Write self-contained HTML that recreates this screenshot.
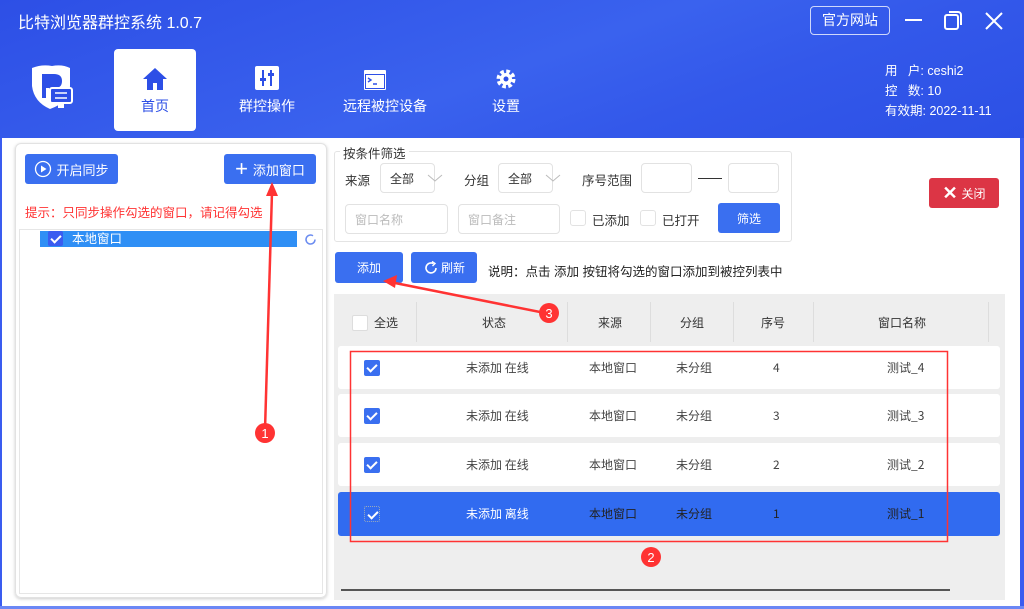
<!DOCTYPE html>
<html><head><meta charset="utf-8"><style>
*{box-sizing:border-box;margin:0;padding:0}
body{width:1024px;height:609px;overflow:hidden;position:relative;background:#fff;font-family:"Liberation Sans","Noto Sans CJK SC",sans-serif;font-size:12px;color:#333}
.a{position:absolute}
.hdr{left:0;top:0;width:1024px;height:138px;background:linear-gradient(160deg,#2d4fe6 0%,#3a62ee 50%,#3358ea 70%,#2c50e5 100%)}
.btn{position:absolute;background:#3a6ff0;color:#fff;border-radius:3px;display:flex;align-items:center;justify-content:center;font-size:12px}
.inp{position:absolute;border:1px solid #e2e2e2;border-radius:4px;background:#fff;color:#bbb;font-size:12px;display:flex;align-items:center;padding-left:9px}
.row{position:absolute;left:338px;width:662px;height:43px;background:#fff;border-radius:3px}
.row span{position:absolute;top:0;line-height:43px;font-size:12px;color:#444;font-family:"Noto Sans CJK SC",sans-serif}
.cb{position:absolute;left:26px;top:14px;width:16px;height:16px;background:#3a6ff0;border-radius:2px}
.cb:after{content:"";position:absolute;left:5px;top:2px;width:4px;height:8px;border:solid #fff;border-width:0 2px 2px 0;transform:rotate(45deg)}
.th{position:absolute;top:314px;font-size:12px;color:#333}
.nav{position:absolute;color:#fff;font-size:14px;text-align:center}
</style></head><body>
<div class="a hdr"></div>
<div class="a" style="left:18px;top:9px;color:#fff;font-size:16px">比特浏览器群控系统 1.0.7</div>
<div class="a" style="left:810px;top:6px;width:80px;height:29px;border:1px solid #cfd8fb;border-radius:4px;color:#fff;font-size:14px;text-align:center;line-height:27px">官方网站</div>
<div class="a" style="left:905px;top:19px;width:17px;height:2px;background:#fff"></div>
<svg class="a" style="left:943px;top:10px" width="22" height="22"><rect x="2" y="5" width="13" height="14" rx="2" fill="none" stroke="#fff" stroke-width="2"/><path d="M6 2h9a3 3 0 0 1 3 3v10" fill="none" stroke="#fff" stroke-width="2"/></svg>
<svg class="a" style="left:984px;top:11px" width="20" height="20"><path d="M2 2L18 18M18 2L2 18" stroke="#fff" stroke-width="2"/></svg>
<div class="a" style="left:885px;top:61px;color:#fff;font-size:12.5px;line-height:20px">用&nbsp;&nbsp;&nbsp;户: ceshi2<br>控&nbsp;&nbsp;&nbsp;数: 10<br>有效期: 2022-11-11</div>
<svg class="a" style="left:28px;top:64px" width="48" height="46"><path d="M4 4 Q14 0 24 2 Q34 0 42 4 V22 Q42 38 22 45 Q6 38 4 22Z" fill="#fff"/><path d="M14 10h12q8 0 8 7t-7 7l6 10h-6l-6-10h-3v10h-4z" fill="#2d4fe6"/><rect x="22" y="24" width="22" height="15" rx="2" fill="#2d4fe6" stroke="#fff" stroke-width="2"/><path d="M27 29h12M27 34h12" stroke="#fff" stroke-width="1.5"/><rect x="30" y="40" width="6" height="4" fill="#fff"/></svg>
<div class="a" style="left:114px;top:49px;width:82px;height:82px;background:#fff;border-radius:4px"></div>
<svg class="a" style="left:142px;top:67px" width="26" height="24"><path d="M13 1L1 12h4v11h6v-7h4v7h6V12h4z" fill="#2d4fe6"/></svg>
<div class="nav" style="left:114px;top:96px;width:82px;color:#2d4fe6">首页</div>
<svg class="a" style="left:255px;top:66px" width="24" height="24"><rect width="24" height="24" rx="2" fill="#fff"/><path d="M8 4v16M16 4v16" stroke="#2d4fe6" stroke-width="2"/><rect x="5" y="12" width="6" height="3" fill="#2d4fe6"/><rect x="13" y="7" width="6" height="3" fill="#2d4fe6"/></svg>
<div class="nav" style="left:228px;top:96px;width:78px">群控操作</div>
<svg class="a" style="left:364px;top:70px" width="22" height="20"><rect width="22" height="20" rx="1" fill="#fff"/><rect x="1" y="4" width="20" height="15" fill="#2d4fe6"/><rect x="2" y="5" width="18" height="13" fill="#fff"/><path d="M4 8l3 2-3 2M9 14h4" stroke="#2d4fe6" stroke-width="1.4" fill="none"/></svg>
<div class="nav" style="left:330px;top:96px;width:110px">远程被控设备</div>
<svg class="a" style="left:496px;top:69px" width="20" height="20"><circle cx="10" cy="10" r="7" fill="none" stroke="#fff" stroke-width="5" stroke-dasharray="3.3 2.2"/><circle cx="10" cy="10" r="6" fill="#fff"/><circle cx="10" cy="10" r="2.5" fill="#2d4fe6"/></svg>
<div class="nav" style="left:478px;top:96px;width:56px">设置</div>
<div class="a" style="left:0;top:138px;width:2px;height:471px;background:#3a5cf0"></div>
<div class="a" style="left:1020px;top:138px;width:4px;height:471px;background:#3a5cf0"></div>
<div class="a" style="left:0;top:606px;width:1024px;height:3px;background:#6b87f5"></div>
<div class="a" style="left:15px;top:143px;width:312px;height:455px;border:1px solid #e2e2e2;border-radius:6px;box-shadow:0 1px 3px #ccc"></div>
<div class="a" style="left:19px;top:229px;width:304px;height:365px;border:1px solid #e6e6e6"></div>
<div class="btn" style="left:25px;top:154px;width:93px;height:30px;font-size:13px"><svg width="18" height="18" style="margin-right:4px"><circle cx="9" cy="9" r="7.5" fill="none" stroke="#fff" stroke-width="1.3"/><path d="M7 5.5v7l5.5-3.5z" fill="#fff"/></svg>开启同步</div>
<div class="btn" style="left:224px;top:154px;width:92px;height:30px;font-size:13px"><span style="font-size:22px;margin-right:5px;line-height:20px">+</span>添加窗口</div>
<div class="a" style="left:25px;top:202px;color:#f33;font-size:12.5px">提示：只同步操作勾选的窗口，请记得勾选</div>
<div class="a" style="left:40px;top:231px;width:257px;height:16px;background:#2f8ff5"></div>
<div class="cb" style="left:48px;top:231px;width:15px;height:15px;background:#3a5cf0"></div>
<div class="a" style="left:72px;top:231px;color:#fff;font-size:12.5px;line-height:16px">本地窗口</div>
<svg class="a" style="left:304px;top:233px" width="13" height="13"><path d="M11 6.5A4.5 4.5 0 1 1 9 2.8" fill="none" stroke="#6b8cf0" stroke-width="1.5"/></svg>
<div class="a" style="left:334px;top:151px;width:458px;height:91px;border:1px solid #e4e4e4;border-radius:3px"></div>
<div class="a" style="left:340px;top:143px;background:#fff;padding:0 3px;font-size:12.5px">按条件筛选</div>
<div class="a" style="left:345px;top:170px;font-size:12.5px">来源</div>
<div class="inp" style="left:380px;top:163px;width:55px;height:30px;color:#333">全部</div><svg class="a" style="left:427px;top:174px" width="16" height="9"><path d="M1 1l7 6 7-6" fill="none" stroke="#bbb"/></svg>
<div class="a" style="left:464px;top:170px;font-size:12.5px">分组</div>
<div class="inp" style="left:498px;top:163px;width:55px;height:30px;color:#333">全部</div><svg class="a" style="left:545px;top:174px" width="16" height="9"><path d="M1 1l7 6 7-6" fill="none" stroke="#bbb"/></svg>
<div class="a" style="left:582px;top:170px;font-size:12.5px">序号范围</div>
<div class="inp" style="left:641px;top:163px;width:51px;height:30px"></div>
<div class="a" style="left:698px;top:178px;width:24px;height:1px;background:#333"></div>
<div class="inp" style="left:728px;top:163px;width:51px;height:30px"></div>
<div class="inp" style="left:345px;top:204px;width:103px;height:30px">窗口名称</div>
<div class="inp" style="left:458px;top:204px;width:102px;height:30px">窗口备注</div>
<div class="inp" style="left:570px;top:210px;width:16px;height:16px;border-radius:3px"></div>
<div class="a" style="left:592px;top:210px;font-size:12.5px">已添加</div>
<div class="inp" style="left:640px;top:210px;width:16px;height:16px;border-radius:3px"></div>
<div class="a" style="left:662px;top:210px;font-size:12.5px">已打开</div>
<div class="btn" style="left:718px;top:203px;width:62px;height:30px">筛选</div>
<div class="btn" style="left:929px;top:178px;width:70px;height:30px;background:#dc3545"><span style="font-size:18px;font-weight:bold;margin-right:4px">✕</span>关闭</div>
<div class="btn" style="left:335px;top:252px;width:68px;height:31px">添加</div>
<div class="btn" style="left:411px;top:252px;width:66px;height:31px"><svg width="16" height="16" style="margin-right:2px"><path d="M13 8A5 5 0 1 1 10.5 3.6" fill="none" stroke="#fff" stroke-width="1.6"/><path d="M9 1.5l3 2-2.5 2.5" fill="none" stroke="#fff" stroke-width="1.4"/></svg>刷新</div>
<div class="a" style="left:488px;top:261px;font-size:12.5px;color:#222">说明：点击 添加 按钮将勾选的窗口添加到被控列表中</div>
<div class="a" style="left:334px;top:294px;width:671px;height:306px;background:#eeeeee"></div>
<div class="a" style="left:416px;top:302px;width:1px;height:40px;background:#ddd"></div>
<div class="a" style="left:567px;top:302px;width:1px;height:40px;background:#ddd"></div>
<div class="a" style="left:650px;top:302px;width:1px;height:40px;background:#ddd"></div>
<div class="a" style="left:733px;top:302px;width:1px;height:40px;background:#ddd"></div>
<div class="a" style="left:813px;top:302px;width:1px;height:40px;background:#ddd"></div>
<div class="a" style="left:988px;top:302px;width:1px;height:40px;background:#ddd"></div>
<div class="a" style="left:352px;top:315px;width:16px;height:16px;background:#fff;border:1px solid #ddd;border-radius:2px"></div>
<div class="th" style="left:374px">全选</div>
<div class="th" style="left:482px">状态</div>
<div class="th" style="left:598px">来源</div>
<div class="th" style="left:680px">分组</div>
<div class="th" style="left:761px">序号</div>
<div class="th" style="left:878px">窗口名称</div>
<div class="row" style="top:346px"><div class="cb"></div><span style="left:128px">未添加 在线</span><span style="left:251px">本地窗口</span><span style="left:338px">未分组</span><span style="left:435px">4</span><span style="left:549px">测试_4</span></div>
<div class="row" style="top:394px"><div class="cb"></div><span style="left:128px">未添加 在线</span><span style="left:251px">本地窗口</span><span style="left:338px">未分组</span><span style="left:435px">3</span><span style="left:549px">测试_3</span></div>
<div class="row" style="top:443px"><div class="cb"></div><span style="left:128px">未添加 在线</span><span style="left:251px">本地窗口</span><span style="left:338px">未分组</span><span style="left:435px">2</span><span style="left:549px">测试_2</span></div>
<div class="row" style="top:492px;background:#316bf0;height:44px"><div class="cb" style="background:none;border:1px dotted #9ab"></div><span style="left:128px;color:#fff">未添加 离线</span><span style="left:251px;color:#222">本地窗口</span><span style="left:338px;color:#222">未分组</span><span style="left:435px;color:#222">1</span><span style="left:549px;color:#222">测试_1</span></div>
<div class="a" style="left:341px;top:589px;width:609px;height:2px;background:#555"></div>
<svg class="a" style="left:0;top:0" width="1024" height="609">
<rect x="350.5" y="351.5" width="597" height="190" fill="none" stroke="#f33" stroke-width="1.5"/>
<path d="M265 430L272 192" stroke="#f33" stroke-width="2.5"/><path d="M272 182l-6 14h12z" fill="#f33"/>
<path d="M545 313L395 283" stroke="#f33" stroke-width="2.5"/><path d="M383 281l14-6-2 13z" fill="#f33"/>
<circle cx="265" cy="433" r="10" fill="#f33"/><text x="265" y="438" fill="#fff" font-size="13" text-anchor="middle" font-family="Liberation Sans">1</text>
<circle cx="549" cy="313" r="10" fill="#f33"/><text x="549" y="318" fill="#fff" font-size="13" text-anchor="middle" font-family="Liberation Sans">3</text>
<circle cx="651" cy="557" r="10" fill="#f33"/><text x="651" y="562" fill="#fff" font-size="13" text-anchor="middle" font-family="Liberation Sans">2</text>
</svg>
</body></html>
